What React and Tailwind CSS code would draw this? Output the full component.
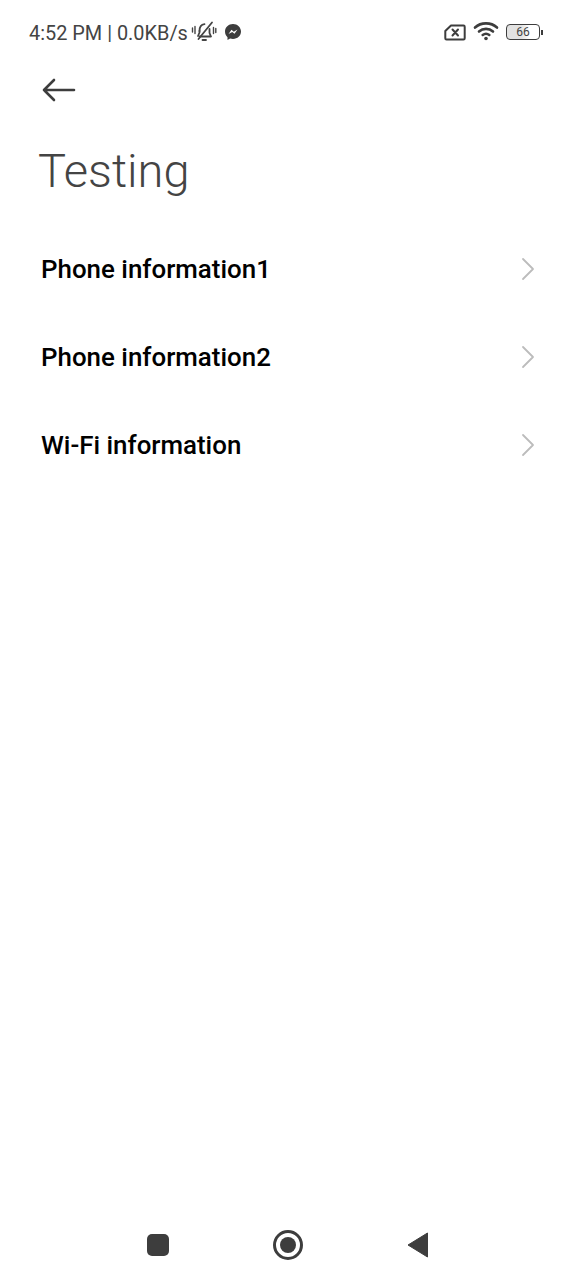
const rows = ["Phone information1", "Phone information2", "Wi-Fi information"];

function MutedBell() {
  return (
    <svg width="26" height="24" viewBox="0 0 26 24" fill="none" stroke="#444" strokeWidth="1.8" strokeLinecap="round" strokeLinejoin="round" className="ml-[3px]">
      <path d="M8.500 11c0-4 2-6.500 5-6.800" />
      <path d="M8.500 11v1.500L7 16" />
      <path d="M18.500 9v4l1.500 3.500H8.500" />
      <path d="M11.500 20h3.500" />
      <path d="M21 2.500 7.500 19" />
      <path d="M1.500 8v4M4 6.500v7M22.500 7.500v6M24.800 8.500v4" strokeWidth="1.400" />
    </svg>
  );
}

function Messenger() {
  return (
    <svg width="18" height="18" viewBox="0 0 18 18" className="ml-[7px]">
      <path d="M9 1C4.500 1 1 4.300 1 8.600c0 2.300 1 4.200 2.500 5.600V17l2.600-1.400c.9.300 1.900.4 2.900.4 4.500 0 8-3.200 8-7.400S13.500 1 9 1z" fill="#3d3d3d" />
      <path d="M4.500 11l3-4.200 2.300 1.900L13.500 6.500l-3 4.300-2.300-1.800z" fill="#fff" />
    </svg>
  );
}

function SimOff() {
  return (
    <svg width="22" height="17" viewBox="0 0 22 17" fill="none" stroke="#3d3d3d" strokeWidth="2" strokeLinejoin="round">
      <path d="M7 1.500h12.500a1.200 1.200 0 0 1 1.200 1.200v11.600a1.200 1.200 0 0 1-1.200 1.200H2.500a1.200 1.200 0 0 1-1.200-1.200V7z" />
      <path d="M8.500 5.500l5.500 6M14 5.500l-5.500 6" strokeLinecap="round" />
    </svg>
  );
}

function Wifi() {
  return (
    <svg width="26" height="20" viewBox="0 0 26 20" fill="none" stroke="#3d3d3d" strokeWidth="2.600" strokeLinecap="round" className="-translate-y-[1px]">
      <path d="M2 6.500C8 1 18 1 24 6.500" />
      <path d="M6 10.500c4-3.500 10-3.500 14 0" />
      <path d="M9.700 14c2-1.500 4.600-1.500 6.600 0" />
      <circle cx="13" cy="17.500" r="1.800" fill="#3d3d3d" stroke="none" />
    </svg>
  );
}

function Battery() {
  return (
    <div className="flex items-center">
      <div className="flex h-[16px] w-[34px] items-center justify-center rounded-[4px] border-[1.5px] border-[#3d3d3d] bg-[linear-gradient(90deg,#e2e2e2_0%,#e2e2e2_45%,#ffffff_70%)] text-[12px] leading-none text-[#444]">
        66
      </div>
      <div className="ml-[1px] h-[5px] w-[2px] bg-[#3d3d3d]" />
    </div>
  );
}

function Chevron() {
  return (
    <svg width="16" height="24" viewBox="0 0 16 24" fill="none" stroke="#bcbcbc" strokeWidth="1.800" strokeLinecap="round" strokeLinejoin="round">
      <path d="M3 2l10 10L3 22" />
    </svg>
  );
}

export default function App() {
  return (
    <div className="flex h-[1280px] w-[576px] flex-col bg-white font-['Roboto',sans-serif]">
      {/* STATUS BAR */}
      <div className="flex h-[64px] items-center justify-between pl-[29px] pr-[33px]">
        <div className="flex items-center text-[19.9px] leading-none text-[#444]">
          <span className="pt-[3px]">4:52 PM | 0.0KB/s</span>
          <MutedBell />
          <Messenger />
        </div>
        <div className="flex items-center gap-[7px]">
          <SimOff />
          <Wifi />
          <Battery />
        </div>
      </div>

      {/* BACK */}
      <div className="mt-[13px] pl-[42px]">
        <svg width="34" height="26" viewBox="0 0 34 26" fill="none" stroke="#3d3d3d" strokeWidth="2.600" strokeLinecap="round" strokeLinejoin="round" className="block">
          <path d="M2 13h30M12 3 2 13l10 10" />
        </svg>
      </div>

      {/* TITLE */}
      <h1 className="mt-[40px] pl-[38px] text-[47px] font-light leading-[56px] text-[#444]">Testing</h1>

      {/* ROWS */}
      <div className="mt-[26px]">
        {rows.map((r) => (
          <div key={r} className="flex h-[88px] items-center justify-between pl-[41px] pr-[40px]">
            <span className="text-[25.9px] font-medium text-black">{r}</span>
            <Chevron />
          </div>
        ))}
      </div>

      {/* NAV BAR */}
      <div className="mt-auto flex h-[46px] items-start pl-[147px]">
        <div className="h-[22px] w-[22px] rounded-[5px] bg-[#3d3d3d]" />
        <div className="ml-[104px] flex h-[30px] w-[30px] -translate-y-[4px] items-center justify-center rounded-full border-[3px] border-[#3d3d3d]">
          <div className="h-[16px] w-[16px] rounded-full bg-[#3d3d3d]" />
        </div>
        <svg width="22" height="26" viewBox="0 0 22 26" className="ml-[104px] -translate-y-[2px]">
          <path d="M20.500 1v24L1 13z" fill="#3d3d3d" stroke="#3d3d3d" strokeLinejoin="round" />
        </svg>
      </div>
    </div>
  );
}
